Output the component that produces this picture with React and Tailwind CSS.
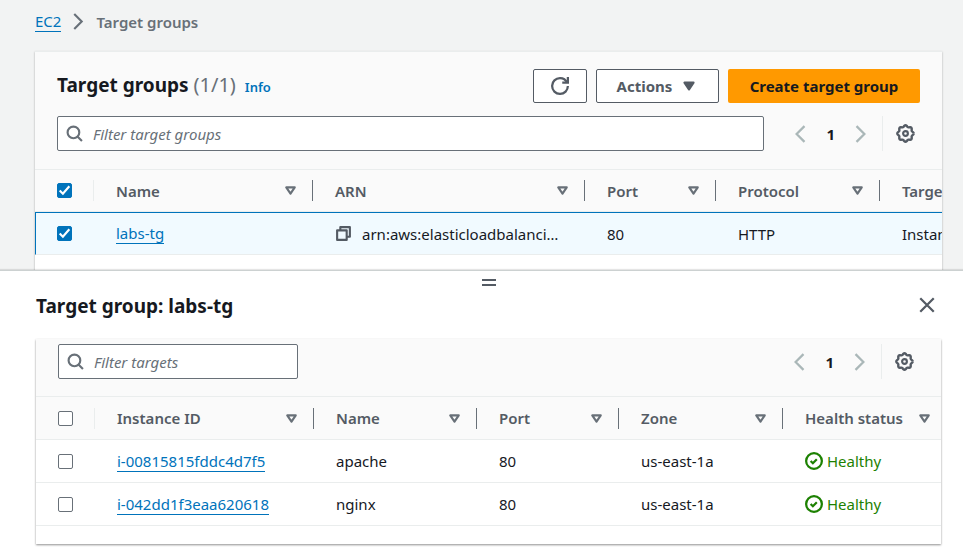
import React from "react";

function Icon({ className = "size-[17px]", children, width = 2 }) {
  return (
    <svg viewBox="0 0 16 16" className={`shrink-0 ${className}`} fill="none" stroke="currentColor" strokeWidth={width} aria-hidden="true">
      {children}
    </svg>
  );
}

// Outline of a gear with eight rounded teeth.
const gearOutline = Array.from({ length: 97 }, (_, i) => {
  const angle = (i / 96) * 2 * Math.PI;
  const r = 6.3 + 0.6 * Math.cos(8 * angle);
  return `${i ? "L" : "M"}${(8 + r * Math.cos(angle)).toFixed(2)} ${(8 + r * Math.sin(angle)).toFixed(2)}`;
}).join("");

const SearchIcon = () => (
  <Icon className="size-[17px] text-[#687078]">
    <circle cx="7" cy="7" r="5.5" />
    <path d="m15 15-4.5-4.5" />
  </Icon>
);
const ChevronLeft = ({ className }) => (
  <Icon className={className}><path d="m12 1-7 7 7 7" /></Icon>
);
const ChevronRight = ({ className }) => (
  <Icon className={className}><path d="m4 1 7 7-7 7" /></Icon>
);
const RefreshIcon = () => (
  <Icon className="size-[18px]">
    <path d="M10 5h5V0" />
    <path d="M15 8a6.957 6.957 0 0 1-7 7 6.957 6.957 0 0 1-7-7 6.957 6.957 0 0 1 7-7 6.87 6.87 0 0 1 6.3 4" />
  </Icon>
);
const CaretFilled = () => (
  <Icon className="size-[18px]"><path d="M4 5h8l-4 6z" fill="currentColor" strokeLinejoin="round" /></Icon>
);
const SortCaret = () => (
  <Icon className="size-[17px] text-[#687078]"><path d="M4 5h8l-4 6z" strokeLinejoin="round" /></Icon>
);
const GearIcon = () => (
  <Icon className="size-[19px]">
    <path d={gearOutline} strokeWidth="2" />
    <circle cx="8" cy="8" r="2" strokeWidth="1.8" />
  </Icon>
);
const CopyIcon = () => (
  <Icon className="size-[17px] text-[#545b64]">
    <path d="M2 5h9v9H2z" strokeLinejoin="round" />
    <path d="M5 5V2h9v9h-3" strokeLinejoin="round" />
  </Icon>
);
const CloseIcon = () => (
  <Icon className="size-[18px]"><path d="m2 2 12 12M14 2 2 14" /></Icon>
);
const HealthyIcon = () => (
  <Icon className="size-[18px]">
    <circle cx="8" cy="8" r="7" />
    <path d="m5 8 2 2 3.5-3.5" />
  </Icon>
);

function Checkbox({ label, checked = false }) {
  return (
    <label className="relative block size-[15px]">
      <input
        type="checkbox"
        aria-label={label}
        defaultChecked={checked}
        className="peer block size-[15px] appearance-none rounded-xs border border-[#687078] bg-white checked:border-[#0073bb] checked:bg-[#0073bb]"
      />
      <svg viewBox="0 0 14 14" className="pointer-events-none absolute inset-0 hidden size-[15px] peer-checked:block" fill="none" stroke="#fff" strokeWidth="2">
        <path d="m2.5 7 3 3 6-7" />
      </svg>
    </label>
  );
}

function Filter({ label, className }) {
  return (
    <label className={`flex h-[35px] items-center gap-2.5 rounded-xs border border-[#687078] bg-white px-2 ${className}`}>
      <SearchIcon />
      <input
        type="search"
        aria-label={label}
        placeholder={label}
        className="min-w-0 flex-1 bg-transparent outline-none placeholder:text-[#687078] placeholder:italic"
      />
    </label>
  );
}

function Pagination() {
  return (
    <div className="flex h-[35px] items-center">
      <nav aria-label="Pagination" className="flex items-center gap-[17px] pr-3">
        <button type="button" aria-label="Previous page" className="text-[#aab7b8]"><ChevronLeft className="size-[18px]" /></button>
        <button type="button" aria-current="page" className="font-bold">1</button>
        <button type="button" aria-label="Next page" className="text-[#aab7b8]"><ChevronRight className="size-[18px]" /></button>
      </nav>
      <div className="flex h-full items-center border-l border-[#eaeded] pr-[5px] pl-[13px] text-[#545b64]">
        <button type="button" aria-label="Preferences"><GearIcon /></button>
      </div>
    </div>
  );
}

function HeaderCell({ children, last = false, height }) {
  return (
    <th scope="col" className={`border-y border-[#eaeded] bg-[#fafafa] p-0 text-left font-semibold text-[#545b64] ${height}`}>
      <div className={`flex h-[21px] items-center justify-between pl-[22px] ${last ? "pr-2" : "border-r border-[#687078] pr-[13px]"}`}>
        {children}
        <SortCaret />
      </div>
    </th>
  );
}

function SelectAllCell({ label, checked, height }) {
  return (
    <th scope="col" className={`border-y border-[#eaeded] bg-[#fafafa] p-0 ${height}`}>
      <div className="flex h-[21px] items-center border-r border-[#eaeded] pl-[22px]">
        <Checkbox label={label} checked={checked} />
      </div>
    </th>
  );
}

function TextLink({ children }) {
  return <a href="#" className="inline-block border-b border-[#0073bb] leading-[19px] text-[#0073bb]">{children}</a>;
}

const targets = [
  { id: "i-00815815fddc4d7f5", name: "apache", port: 80, zone: "us-east-1a", health: "Healthy" },
  { id: "i-042dd1f3eaa620618", name: "nginx", port: 80, zone: "us-east-1a", health: "Healthy" },
];

const groupCell = "h-[43px] border-t border-b border-t-[#0073bb] border-b-[#eaeded] bg-[#f1faff] py-0 pr-0 pl-[22px] align-middle";
const targetCell = "h-[43px] border-b border-[#eaeded] py-0 pr-0 pl-[22px] align-middle";

function GroupsTable() {
  const height = "h-[43px]";
  return (
    <table className="w-[1025px] table-fixed border-separate border-spacing-0">
      <colgroup>
        <col className="w-[59px]" />
        <col className="w-[219px]" />
        <col className="w-[272px]" />
        <col className="w-[131px]" />
        <col className="w-[164px]" />
        <col />
      </colgroup>
      <thead>
        <tr>
          <SelectAllCell label="Select all target groups" checked height={height} />
          <HeaderCell height={height}>Name</HeaderCell>
          <HeaderCell height={height}>ARN</HeaderCell>
          <HeaderCell height={height}>Port</HeaderCell>
          <HeaderCell height={height}>Protocol</HeaderCell>
          <HeaderCell height={height} last>Target type</HeaderCell>
        </tr>
      </thead>
      <tbody>
        <tr>
          <td className="h-[43px] border-t border-b border-l border-t-[#0073bb] border-b-[#eaeded] border-l-[#0073bb] bg-[#f1faff] py-0 pr-0 pl-[21px]">
            <Checkbox label="Select labs-tg" checked />
          </td>
          <td className={groupCell}><TextLink>labs-tg</TextLink></td>
          <td className={groupCell}>
            <div className="flex items-center gap-2.5">
              <button type="button" aria-label="Copy ARN"><CopyIcon /></button>
              <span>arn:aws:elasticloadbalanci…</span>
            </div>
          </td>
          <td className={groupCell}>80</td>
          <td className={groupCell}>HTTP</td>
          <td className={groupCell}>Instance</td>
        </tr>
      </tbody>
    </table>
  );
}

function TargetsTable() {
  const height = "h-[44px]";
  return (
    <table className="w-full table-fixed border-separate border-spacing-0">
      <colgroup>
        <col className="w-[59px]" />
        <col className="w-[219px]" />
        <col className="w-[163px]" />
        <col className="w-[142px]" />
        <col className="w-[164px]" />
        <col />
      </colgroup>
      <thead>
        <tr>
          <SelectAllCell label="Select all targets" height={height} />
          <HeaderCell height={height}>Instance ID</HeaderCell>
          <HeaderCell height={height}>Name</HeaderCell>
          <HeaderCell height={height}>Port</HeaderCell>
          <HeaderCell height={height}>Zone</HeaderCell>
          <HeaderCell height={height} last>Health status</HeaderCell>
        </tr>
      </thead>
      <tbody>
        {targets.map((t) => (
          <tr key={t.id}>
            <td className={targetCell}><Checkbox label={`Select ${t.id}`} /></td>
            <td className={targetCell}><TextLink>{t.id}</TextLink></td>
            <td className={targetCell}>{t.name}</td>
            <td className={targetCell}>{t.port}</td>
            <td className={targetCell}>{t.zone}</td>
            <td className={targetCell}>
              <span className="flex items-center gap-1 text-[#1d8102]"><HealthyIcon />{t.health}</span>
            </td>
          </tr>
        ))}
      </tbody>
    </table>
  );
}

export default function App() {
  return (
    <div className="flex h-screen flex-col overflow-hidden bg-[#f2f3f3] font-['Noto_Sans','Open_Sans',sans-serif] text-[15px] leading-5 whitespace-nowrap text-[#16191f]">
      <main className="min-h-0 flex-1 overflow-hidden pr-[21px] pl-[35px]">
        <nav aria-label="Breadcrumb" className="flex h-[51px] items-center gap-[9px] pb-2">
          <TextLink>EC2</TextLink>
          <ChevronRight className="size-[17px] text-[#687078]" />
          <span className="font-semibold text-[#687078]">Target groups</span>
        </nav>
        <section className="h-full overflow-hidden border-t border-[#eaeded] bg-white shadow-[0_1px_2px_#00000050]">
          <div className="flex flex-col gap-[13px] bg-[#fafafa] px-[22px] pt-[17px] pb-[18px]">
            <div className="flex items-center justify-between">
              <div className="flex items-baseline gap-[9px] pb-0.5">
                <h1 className="text-[19px] leading-6 font-bold">
                  Target groups <span className="text-xl leading-6 font-normal text-[#687078]">(1/1)</span>
                </h1>
                <a href="#" className="text-[13px] font-semibold text-[#0073bb]">Info</a>
              </div>
              <div className="flex gap-[9px]">
                <button type="button" aria-label="Refresh" className="flex h-[34px] w-[54px] items-center justify-center rounded-xs border border-[#545b64] bg-white text-[#545b64]"><RefreshIcon /></button>
                <button type="button" className="flex h-[34px] w-[123px] items-center justify-center gap-2 rounded-xs border border-[#545b64] bg-white font-bold text-[#545b64]">Actions<CaretFilled /></button>
                <button type="button" className="h-[34px] w-48 rounded-xs bg-[#ff9900] font-bold">Create target group</button>
              </div>
            </div>
            <div className="flex items-center gap-[27px]">
              <Filter label="Filter target groups" className="flex-1" />
              <Pagination />
            </div>
          </div>
          <GroupsTable />
        </section>
      </main>
      <aside className="border-t border-[#ccd1d1] bg-white pr-[22px] pb-1.5 pl-9 shadow-[0_-1px_1px_#0000001a]">
        <button type="button" aria-label="Resize panel" className="mx-auto flex h-[22px] w-3.5 flex-col justify-center gap-[3px]">
          <span className="h-0.5 w-full bg-[#545b64]" />
          <span className="h-0.5 w-full bg-[#545b64]" />
        </button>
        <div className="flex h-[46px] items-start justify-between pr-[5px]">
          <h2 className="pt-px text-[19px] leading-6 font-bold">Target group: labs-tg</h2>
          <button type="button" aria-label="Close panel" className="pt-[3px] text-[#545b64]"><CloseIcon /></button>
        </div>
        <section className="bg-white pb-[18px] shadow-[0_1px_2px_#00000070]">
          <div className="flex items-center justify-between bg-[#fafafa] px-[22px] pt-[5px] pb-[17px]">
            <Filter label="Filter targets" className="w-60" />
            <Pagination />
          </div>
          <TargetsTable />
        </section>
      </aside>
    </div>
  );
}
